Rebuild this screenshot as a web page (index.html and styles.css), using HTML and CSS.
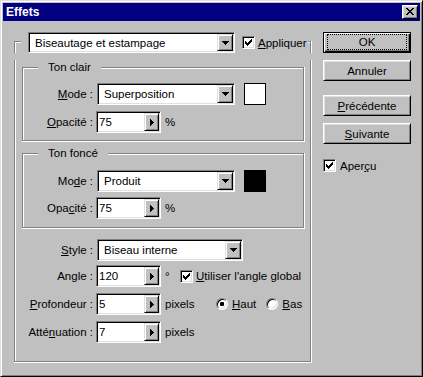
FILE: index.html
```html
<!DOCTYPE html>
<html lang="fr">
<head>
<meta charset="utf-8">
<title>Effets</title>
<link rel="stylesheet" href="styles.css">
</head>
<body>
<div class="window">
  <div class="titlebar">
    <span class="title">Effets</span>
    <span class="close-btn"><svg class="px" width="8" height="7" viewBox="0 0 8 7"><path d="M0 0h2v1h-2zM6 0h2v1h-2zM1 1h2v1h-2zM5 1h2v1h-2zM2 2h4v1h-4zM3 3h2v1h-2zM2 4h4v1h-4zM1 5h2v1h-2zM5 5h2v1h-2zM0 6h2v1h-2zM6 6h2v1h-2z"/></svg></span>
  </div>
  <div class="content">
    <div class="group group-main">
      <div class="group-head">
        <div class="legend-main">
          <div class="combo combo-main">
            <span class="val">Biseautage et estampage</span>
            <span class="drop"><svg class="px" width="7" height="4" viewBox="0 0 7 4"><path d="M0 0h7v1h-1v1h-1v1h-1v1h-1v-1h-1v-1h-1v-1h-1z"/></svg></span>
          </div>
          <span class="check check-apply">
            <span class="cb"><svg class="px" width="7" height="7" viewBox="0 0 7 7"><path d="M6 0h1v1h-1zM5 1h2v1h-2zM0 2h1v1h-1zM4 2h3v1h-3zM0 3h2v1h-2zM3 3h3v1h-3zM0 4h5v1h-5zM1 5h3v1h-3zM2 6h1v1h-1z"/></svg></span>
            <span class="check-text"><u>A</u>ppliquer</span>
          </span>
        </div>
      </div>
      <div class="group-body main-body">
        <div class="group group-sub sub-clair">
          <div class="group-head"><div class="legend">Ton clair</div></div>
          <div class="group-body clair-body">
            <div class="row">
              <span class="lbl"><u>M</u>ode :</span>
              <div class="combo combo-mode">
                <span class="val">Superposition</span>
                <span class="drop"><svg class="px" width="7" height="4" viewBox="0 0 7 4"><path d="M0 0h7v1h-1v1h-1v1h-1v1h-1v-1h-1v-1h-1v-1h-1z"/></svg></span>
              </div>
              <span class="swatch swatch-white"></span>
            </div>
            <div class="row row-clair-op">
              <span class="lbl"><u>O</u>pacité :</span>
              <div class="spin">
                <span class="val">75</span>
                <span class="spin-btn"><svg class="px" width="4" height="7" viewBox="0 0 4 7"><path d="M0 0h1v1h1v1h1v1h1v1h-1v1h-1v1h-1v1h-1z"/></svg></span>
              </div>
              <span class="unit">%</span>
            </div>
          </div>
        </div>
        <div class="group group-sub sub-fonce">
          <div class="group-head"><div class="legend">Ton foncé</div></div>
          <div class="group-body fonce-body">
            <div class="row">
              <span class="lbl">Mo<u>d</u>e :</span>
              <div class="combo combo-mode">
                <span class="val">Produit</span>
                <span class="drop"><svg class="px" width="7" height="4" viewBox="0 0 7 4"><path d="M0 0h7v1h-1v1h-1v1h-1v1h-1v-1h-1v-1h-1v-1h-1z"/></svg></span>
              </div>
              <span class="swatch swatch-black"></span>
            </div>
            <div class="row row-fonce-op">
              <span class="lbl">Opa<u>c</u>ité :</span>
              <div class="spin">
                <span class="val">75</span>
                <span class="spin-btn"><svg class="px" width="4" height="7" viewBox="0 0 4 7"><path d="M0 0h1v1h1v1h1v1h1v1h-1v1h-1v1h-1v1h-1z"/></svg></span>
              </div>
              <span class="unit">%</span>
            </div>
          </div>
        </div>
        <div class="lower">
          <div class="row">
            <span class="lbl lbl-wide"><u>S</u>tyle :</span>
            <div class="combo combo-style">
              <span class="val">Biseau interne</span>
              <span class="drop"><svg class="px" width="7" height="4" viewBox="0 0 7 4"><path d="M0 0h7v1h-1v1h-1v1h-1v1h-1v-1h-1v-1h-1v-1h-1z"/></svg></span>
            </div>
          </div>
          <div class="row row-angle">
            <span class="lbl lbl-wide">An<u>g</u>le :</span>
            <div class="spin">
              <span class="val">120</span>
              <span class="spin-btn"><svg class="px" width="4" height="7" viewBox="0 0 4 7"><path d="M0 0h1v1h1v1h1v1h1v1h-1v1h-1v1h-1v1h-1z"/></svg></span>
            </div>
            <span class="unit unit-deg">°</span>
            <span class="check">
              <span class="cb"><svg class="px" width="7" height="7" viewBox="0 0 7 7"><path d="M6 0h1v1h-1zM5 1h2v1h-2zM0 2h1v1h-1zM4 2h3v1h-3zM0 3h2v1h-2zM3 3h3v1h-3zM0 4h5v1h-5zM1 5h3v1h-3zM2 6h1v1h-1z"/></svg></span>
              <span class="check-text"><u>U</u>tiliser l'angle global</span>
            </span>
          </div>
          <div class="row row-depth">
            <span class="lbl lbl-wide"><u>P</u>rofondeur :</span>
            <div class="spin">
              <span class="val">5</span>
              <span class="spin-btn"><svg class="px" width="4" height="7" viewBox="0 0 4 7"><path d="M0 0h1v1h1v1h1v1h1v1h-1v1h-1v1h-1v1h-1z"/></svg></span>
            </div>
            <span class="unit unit-px">pixels</span>
            <span class="radio-opt">
              <span class="radio radio-on"><span class="dot"></span></span>
              <span class="radio-text"><u>H</u>aut</span>
            </span>
            <span class="radio-opt radio-opt-2">
              <span class="radio"></span>
              <span class="radio-text"><u>B</u>as</span>
            </span>
          </div>
          <div class="row row-depth">
            <span class="lbl lbl-wide">Atté<u>n</u>uation :</span>
            <div class="spin">
              <span class="val">7</span>
              <span class="spin-btn"><svg class="px" width="4" height="7" viewBox="0 0 4 7"><path d="M0 0h1v1h1v1h1v1h1v1h-1v1h-1v1h-1v1h-1z"/></svg></span>
            </div>
            <span class="unit">pixels</span>
          </div>
        </div>
      </div>
    </div>
    <div class="buttons">
      <div class="btn btn-default"><span class="focus">OK</span></div>
      <div class="btn btn-gap7">Annuler</div>
      <div class="btn btn-gap14"><span><u>P</u>récédente</span></div>
      <div class="btn btn-gap7"><span><u>S</u>uivante</span></div>
      <span class="check check-preview">
        <span class="cb"><svg class="px" width="7" height="7" viewBox="0 0 7 7"><path d="M6 0h1v1h-1zM5 1h2v1h-2zM0 2h1v1h-1zM4 2h3v1h-3zM0 3h2v1h-2zM3 3h3v1h-3zM0 4h5v1h-5zM1 5h3v1h-3zM2 6h1v1h-1z"/></svg></span>
        <span class="check-text">Aper<u>ç</u>u</span>
      </span>
    </div>
  </div>
</div>
</body>
</html>
```

FILE: styles.css
```css
* { box-sizing: border-box; }
html, body { margin: 0; padding: 0; }
body {
  background: #c0c0c0;
  font-family: "Liberation Sans", Arial, sans-serif;
  font-size: 11.5px;
  color: #000;
}
u { text-decoration: underline; text-underline-offset: 1px; }
.px { display: block; shape-rendering: crispEdges; fill: #000; }

.window {
  width: 423px;
  height: 377px;
  background: #c0c0c0;
  border: 1px solid;
  border-color: #dfdfdf #000 #000 #dfdfdf;
  box-shadow: inset 1px 1px #fff, inset -1px -1px #808080;
  padding: 2px;
  display: flex;
  flex-direction: column;
}

.titlebar {
  height: 18px;
  background: #000080;
  display: flex;
  align-items: center;
  justify-content: space-between;
  padding: 0 2px 0 3px;
}
.title {
  color: #fff;
  font-weight: bold;
  font-size: 12px;
}
.close-btn {
  width: 16px;
  height: 14px;
  background: #c0c0c0;
  border: 1px solid;
  border-color: #fff #000 #000 #fff;
  box-shadow: inset 1px 1px #dfdfdf, inset -1px -1px #808080;
  display: flex;
  align-items: center;
  justify-content: center;
  padding: 0 1px 1px 0;
}

.content {
  display: flex;
  align-items: flex-start;
  padding: 11px 0 0 11px;
}

/* group boxes */
.group-head { display: flex; }
.group-head::before {
  content: "";
  width: var(--lead);
  margin-top: var(--line);
  border-top: 1px solid #808080;
  border-left: 1px solid #808080;
  box-shadow: inset 1px 1px #fff;
}
.group-head::after {
  content: "";
  flex: 1;
  margin-top: var(--line);
  border-top: 1px solid #808080;
  border-right: 1px solid #808080;
  box-shadow: inset 0 1px #fff, 1px 0 #fff;
}
.group-body {
  border: 1px solid #808080;
  border-top: 0;
  box-shadow: inset 1px 0 #fff, 1px 0 #fff, 0 1px #fff, 1px 1px #fff;
}
.group-main { width: 297px; --lead: 6px; --line: 9px; }
.legend-main {
  display: flex;
  align-items: center;
  height: 21px;
  padding: 0 1px 0 7px;
}
.main-body { padding: 0 0 18px 0; }

.group-sub { width: 282px; margin-left: 7px; --lead: 15px; --line: 7px; }
.sub-clair { margin-top: 7px; }
.sub-fonce { margin-top: 5px; }
.legend { line-height: 15px; padding: 0 10px; white-space: nowrap; }
.clair-body { padding: 8px 0 7px 0; }
.fonce-body { padding: 9px 0 8px 0; }
.row-clair-op { margin-top: 6px; }
.row-fonce-op { margin-top: 5px; }

.lower { margin-top: 11px; }
.row-angle { margin-top: 4px; }
.row-depth { margin-top: 6px; }

/* rows */
.row {
  display: flex;
  align-items: center;
  height: 22px;
  white-space: nowrap;
}
.lbl {
  width: 70px;
  text-align: right;
  margin-right: 3px;
}
.lbl-wide { width: 78px; }

/* sunken fields */
.combo, .spin {
  height: 22px;
  background: #fff;
  border: 1px solid;
  border-color: #808080 #fff #fff #808080;
  box-shadow: inset 1px 1px #000, inset -1px -1px #dfdfdf;
  display: flex;
  align-items: center;
}
.combo .val { flex: 1; padding-left: 6px; overflow: hidden; white-space: nowrap; }
.spin .val { flex: 1; padding-left: 2px; }
.combo-main { width: 207px; height: 21px; }
.combo-mode { width: 138px; margin-left: 1px; }
.combo-style { width: 146px; margin-left: 1px; }
.spin { width: 65px; }

.drop, .spin-btn {
  align-self: stretch;
  margin: 1px 1px 1px 0;
  background: #c0c0c0;
  border: 1px solid;
  border-color: #dfdfdf #000 #000 #dfdfdf;
  box-shadow: inset 1px 1px #fff, inset -1px -1px #808080;
  display: flex;
  align-items: center;
  justify-content: center;
}
.drop { width: 16px; }
.spin-btn { width: 15px; }

.swatch {
  width: 22px;
  height: 22px;
  border: 1px solid #000;
  margin-left: 9px;
}
.swatch-white { background: #fff; }
.swatch-black { background: #000; }

.unit { margin-left: 4px; }
.unit-deg { width: 15px; }
.unit-px { width: 51px; }

/* checkbox */
.check { display: flex; align-items: center; white-space: nowrap; }
.cb {
  width: 13px;
  height: 13px;
  flex: none;
  background: #fff;
  border: 1px solid;
  border-color: #808080 #fff #fff #808080;
  box-shadow: inset 1px 1px #000, inset -1px -1px #dfdfdf;
  display: flex;
  align-items: center;
  justify-content: center;
}
.check-text { margin-left: 3px; }
.check-apply { margin-left: 7px; }

/* radio */
.radio-opt { display: flex; align-items: center; }
.radio {
  width: 12px;
  height: 12px;
  flex: none;
  border-radius: 50%;
  background: #fff;
  border: 1px solid;
  border-color: #808080 #fff #fff #808080;
  box-shadow: inset 1px 1px #000, inset -1px -1px #dfdfdf;
  display: flex;
  align-items: center;
  justify-content: center;
}
.dot { width: 4px; height: 4px; border-radius: 1px; background: #000; }
.radio-text { margin-left: 4px; }
.radio-opt-2 { margin-left: 10px; }

/* buttons */
.buttons {
  width: 88px;
  margin-left: 12px;
  display: flex;
  flex-direction: column;
}
.btn {
  height: 21px;
  background: #c0c0c0;
  border: 1px solid;
  border-color: #fff #000 #000 #fff;
  box-shadow: inset 1px 1px #dfdfdf, inset -1px -1px #808080;
  display: flex;
  align-items: center;
  justify-content: center;
  white-space: nowrap;
}
.btn-default {
  border-color: #000;
  box-shadow: inset 1px 1px #fff, inset -1px -1px #000, inset -2px -2px #808080;
  padding: 1px 3px 2px 3px;
  align-items: stretch;
}
.focus {
  flex: 1;
  border: 1px dotted #000;
  display: flex;
  align-items: center;
  justify-content: center;
}
.btn-gap7 { margin-top: 7px; }
.btn-gap14 { margin-top: 14px; }
.check-preview { margin-top: 14px; height: 15px; }
.check-preview .check-text { margin-left: 4px; }
```
